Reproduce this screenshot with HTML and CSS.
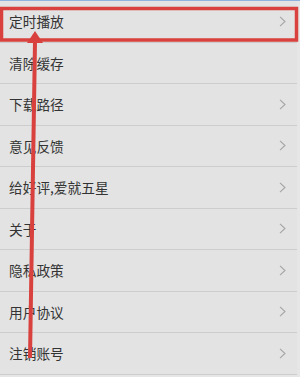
FILE: index.html
```html
<!DOCTYPE html>
<html lang="zh-CN">
  <head>
    <meta charset="UTF-8" />
    <meta name="viewport" content="width=device-width, initial-scale=1.0" />
    <title>设置</title>
    <link rel="stylesheet" href="styles.css">
  </head>
  <body>
    <div class="topbar"></div>
    <ul class="settings">
      <li class="item"><span>定时播放</span><svg class="chevron" viewBox="0 0 7 11"><path d="M1 0.8 L6 5.5 L1 10.2" /></svg></li>
      <li class="item"><span>清除缓存</span></li>
      <li class="item"><span>下载路径</span><svg class="chevron" viewBox="0 0 7 11"><path d="M1 0.8 L6 5.5 L1 10.2" /></svg></li>
      <li class="item"><span>意见反馈</span><svg class="chevron" viewBox="0 0 7 11"><path d="M1 0.8 L6 5.5 L1 10.2" /></svg></li>
      <li class="item"><span>给好评,爱就五星</span><svg class="chevron" viewBox="0 0 7 11"><path d="M1 0.8 L6 5.5 L1 10.2" /></svg></li>
      <li class="item"><span>关于</span><svg class="chevron" viewBox="0 0 7 11"><path d="M1 0.8 L6 5.5 L1 10.2" /></svg></li>
      <li class="item"><span>隐私政策</span><svg class="chevron" viewBox="0 0 7 11"><path d="M1 0.8 L6 5.5 L1 10.2" /></svg></li>
      <li class="item"><span>用户协议</span><svg class="chevron" viewBox="0 0 7 11"><path d="M1 0.8 L6 5.5 L1 10.2" /></svg></li>
      <li class="item"><span>注销账号</span><svg class="chevron" viewBox="0 0 7 11"><path d="M1 0.8 L6 5.5 L1 10.2" /></svg></li>
    </ul>

    <!-- red annotation drawn over the list -->
    <svg class="markup" viewBox="0 0 300 377">
      <rect x="1.5" y="8.5" width="295" height="31.5" />
      <line x1="35" y1="42" x2="30" y2="358" />
      <polygon points="35,31 27,43 43,43" />
    </svg>
  </body>
</html>
```

FILE: styles.css
```css
body {
  margin: 0;
  background: #e6e6e6;
  font-family: "Noto Sans CJK SC", "Noto Sans", sans-serif;
  position: relative;
  height: 377px;
  overflow: hidden;
}

.topbar {
  height: 1px;
  background: #8fb2de;
}

.settings {
  list-style: none;
  margin: 0;
  padding: 0;
  width: 297px;
  background: #e3e3e3;
}

.item {
  display: flex;
  align-items: center;
  justify-content: space-between;
  height: 40.5px;
  padding: 0 11px 0 9px;
  border-bottom: 1px solid #cdcdcd;
  font-size: 13.7px;
  color: #333;
}

.chevron {
  width: 7px;
  height: 11px;
  fill: none;
  stroke: #a5a5a5;
  stroke-width: 1.1;
}

.markup {
  position: absolute;
  top: 0;
  left: 0;
  width: 300px;
  height: 377px;
  pointer-events: none;
}

.markup rect {
  fill: none;
  stroke: #d8413d;
  stroke-width: 3.5;
}

.markup line {
  stroke: #d8413d;
  stroke-width: 4;
}

.markup polygon {
  fill: #d8413d;
}
```
